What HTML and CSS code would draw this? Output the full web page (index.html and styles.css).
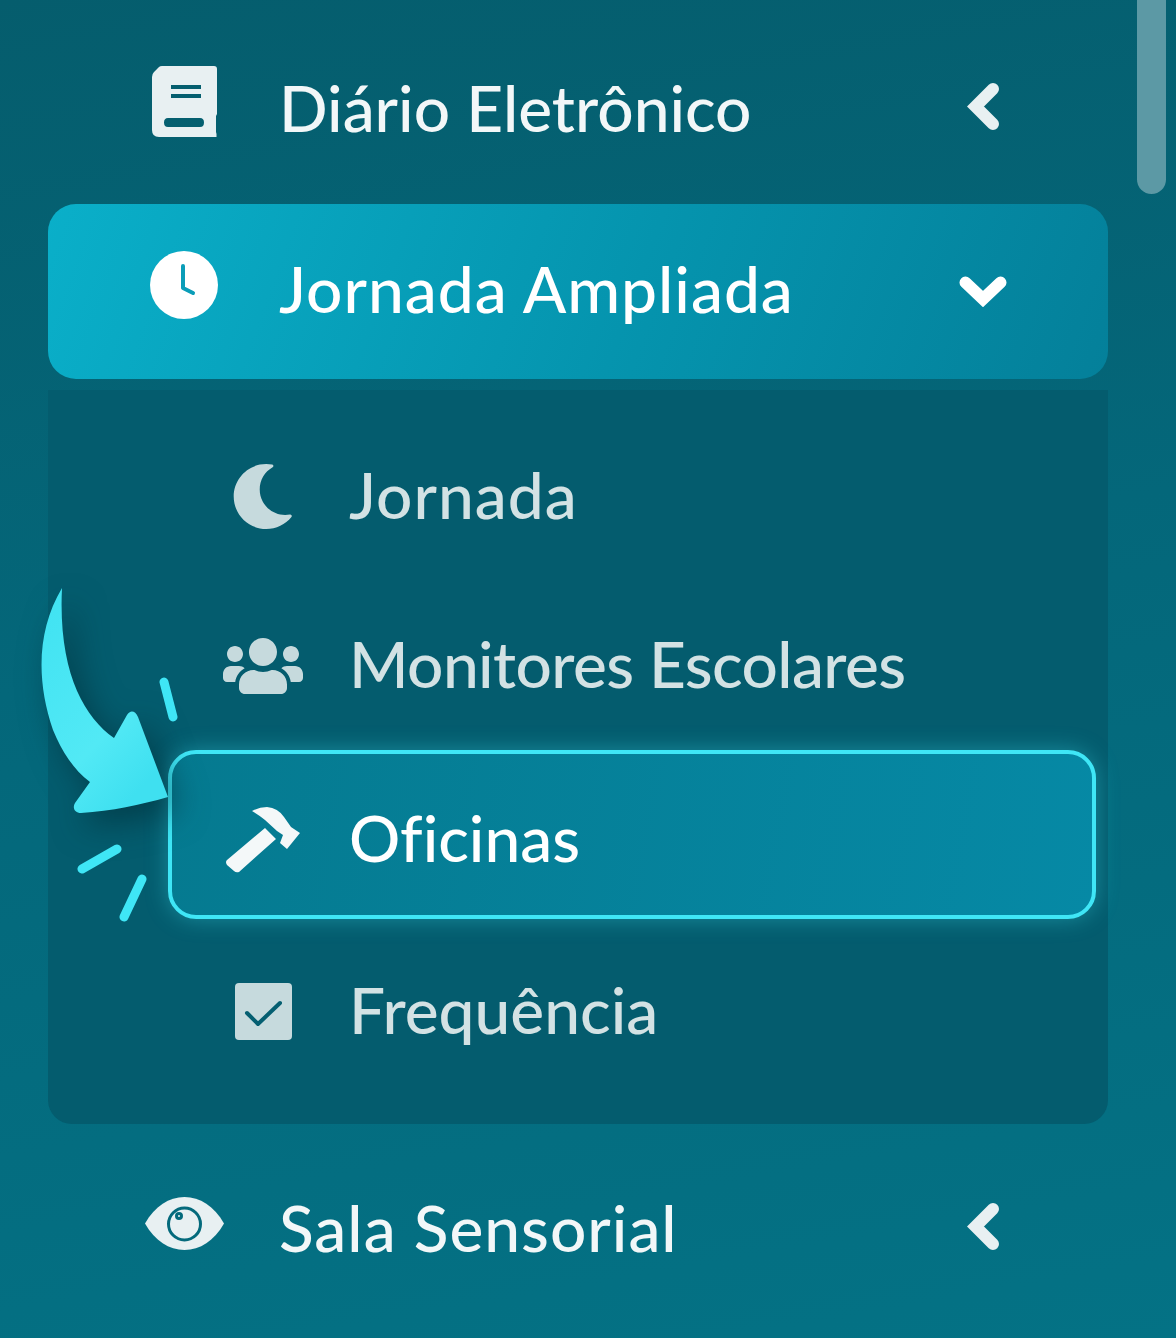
FILE: index.html
```html
<!DOCTYPE html>
<html lang="pt-BR">
<head>
    <meta charset="utf-8">
    <title>Menu</title>
    <link rel="stylesheet" href="styles.css">
</head>
<body>
<nav class="sidebar">
    <a class="item item-first">
        <span class="icon icon-up"><svg class="i-book" viewBox="0 0 65 71"><path fill-rule="evenodd" d="M10 0H62Q65 0 65 3V48L64 50V66L64.500 68V71H7Q0 71 0 64V11Q0 8 2 6L7 1Q8 0 10 0ZM19 19V23H49V19ZM19 28V32H49V28ZM16 52Q12 52 12 56.500Q12 61 16 61H48Q52 61 52 56.500Q52 52 48 52Z"/></svg></span>
        <span class="label">Diário Eletrônico</span>
        <svg class="chev chev-left" viewBox="0 0 33 47"><path d="M26 6L8.500 23.500L26 41"/></svg>
    </a>
    <a class="item item-open">
        <span class="icon icon-up"><svg class="i-clock" viewBox="0 0 68 68"><circle cx="34" cy="34" r="34"/><path class="hand" d="M33 15v22l10 5"/></svg></span>
        <span class="label label-wide">Jornada Ampliada</span>
        <svg class="chev chev-down" viewBox="0 0 48 31"><path d="M6.500 6.500L24 23L41.500 6.500"/></svg>
    </a>
    <div class="submenu">
        <a class="subitem">
            <span class="icon"><svg class="i-moon" viewBox="27 0 462 512"><path d="M283.211 512c78.962 0 151.079-35.925 198.857-94.792 7.068-8.708-.639-21.43-11.562-19.35-124.203 23.654-238.262-71.576-238.262-196.954 0-72.222 38.662-138.635 101.498-174.394 9.686-5.512 7.25-20.197-3.756-22.23A258.156 258.156 0 0 0 283.211 0c-141.309 0-256 114.511-256 256 0 141.309 114.511 256 256 256z"/></svg></span>
            <span class="label label-wide">Jornada</span>
        </a>
        <a class="subitem">
            <span class="icon"><svg class="i-users" viewBox="0 32 640 448"><path d="M96 224c35.300 0 64-28.700 64-64s-28.700-64-64-64-64 28.700-64 64 28.700 64 64 64zm448 0c35.300 0 64-28.700 64-64s-28.700-64-64-64-64 28.700-64 64 28.700 64 64 64zm32 32h-64c-17.600 0-33.500 7.100-45.100 18.600 40.300 22.100 68.900 62 75.100 109.400h66c17.700 0 32-14.300 32-32v-32c0-35.300-28.700-64-64-64zm-256 0c61.900 0 112-50.100 112-112S381.900 32 320 32 208 82.100 208 144s50.100 112 112 112zm76.800 32h-8.300c-20.800 10-43.900 16-68.500 16s-47.600-6-68.500-16h-8.300C179.600 288 128 339.600 128 403.200V432c0 26.500 21.500 48 48 48h288c26.500 0 48-21.500 48-48v-28.800c0-63.600-51.600-115.200-115.200-115.200zm-223.700-13.400C161.500 263.100 145.600 256 128 256H64c-35.300 0-64 28.700-64 64v32c0 17.700 14.300 32 32 32h65.900c6.300-47.400 34.900-87.300 75.200-109.400z"/></svg></span>
            <span class="label label-tight">Monitores Escolares</span>
        </a>
        <a class="subitem subitem-on">
            <span class="icon"><svg class="i-hammer" viewBox="0 0 74 66"><path d="M26 4Q33 0 41 0Q52 1 58 10L65 20L74 26L61 42L54 36L57 28L51 24L39 13Q33 8 26 4ZM39 21L50 32L13 65Q10 66 8 64L1 58Q-1 55 1 53Z"/></svg></span>
            <span class="label">Oficinas</span>
        </a>
        <a class="subitem subitem-last">
            <span class="icon"><svg class="i-check" viewBox="0 0 57 57"><rect width="57" height="57" rx="4"/><path class="tick" d="M12 30l11 11 22-21"/></svg></span>
            <span class="label">Frequência</span>
        </a>
    </div>
    <a class="item item-last">
        <span class="icon"><svg class="i-eye" viewBox="0 0 79 53"><path d="M0 26.500C10 9 24 0 39.500 0S69 9 79 26.500C69 44 55 53 39.500 53S10 44 0 26.500Z"/><circle class="ring" cx="39.500" cy="27" r="16"/><circle class="ring-dot" cx="34" cy="19" r="2.500"/></svg></span>
        <span class="label label-wide">Sala Sensorial</span>
        <svg class="chev chev-left" viewBox="0 0 33 47"><path d="M26 6L8.500 23.500L26 41"/></svg>
    </a>
</nav>
<div class="scroll-thumb"></div>
<svg class="pointer" viewBox="30 575 160 360">
    <defs>
        <linearGradient id="arrowfill" x1="0" y1="0" x2="0.6" y2="1">
            <stop offset="0" stop-color="#3fe2f2"/>
            <stop offset="0.7" stop-color="#52e9f5"/>
            <stop offset="1" stop-color="#3fe0f0"/>
        </linearGradient>
    </defs>
    <path class="arrow" d="M62 588C37 630 36 680 53 730C62 752 74 770 90 782L75 803C72 808 75 813 81 813C112 811 140 805 168 797L138 717C135 710 130 710 127 715L114 738C83 716 58 670 62 588Z"/>
    <path class="dash" d="M164 682L173 717M82 869L117 849M124 917L142 879"/>
</svg>
</body>
</html>
```

FILE: styles.css
```css
html {
    overflow: hidden;
}

body {
    margin: 0;
    width: 1176px;
    height: 1338px;
    overflow: hidden;
    position: relative;
    background: linear-gradient(170deg, #055d6d 0%, #04677a 45%, #047285 100%);
    font-family: "Lato", "Noto Sans", sans-serif;
}

.sidebar {
    width: 1060px;
    margin-left: 48px;
    padding-top: 23px;
    display: flex;
    flex-direction: column;
}

.icon {
    width: 80px;
    flex: none;
    display: flex;
    justify-content: center;
}

.icon-up {
    margin-bottom: 14px;
}

.icon svg {
    display: block;
}

.label {
    font-size: 64px;
    font-weight: 500;
    line-height: 70px;
    font-variant-ligatures: none;
    margin-top: -5px;
}

.label-wide {
    letter-spacing: 1px;
}

.label-tight {
    letter-spacing: -0.600px;
}

.item {
    height: 175px;
    display: flex;
    align-items: center;
    padding-left: 96px;
    color: #f2f7f8;
    fill: #e8f0f2;
}

.item .label {
    margin-left: 55px;
}

.item-first {
    margin-bottom: 6px;
}

.item-open {
    color: #fff;
    fill: #fff;
    border-radius: 28px;
    background: linear-gradient(110deg, #0aafc9 0%, #0594ae 55%, #04809a 100%);
}

.item-last {
    margin-top: 19px;
}

.item .chev {
    fill: none;
    stroke: #e8f0f2;
    stroke-width: 12;
    stroke-linecap: round;
}

.item-open .chev {
    stroke: #fff;
}

.chev-left {
    width: 33px;
    height: 47px;
    margin-left: auto;
    margin-right: 108px;
    margin-bottom: 8px;
}

.chev-down {
    width: 48px;
    height: 31px;
    margin-left: auto;
    margin-right: 101px;
}

.i-book {
    width: 65px;
    height: 71px;
    margin-bottom: 4px;
}

.i-clock {
    width: 68px;
    height: 68px;
}

.i-clock .hand {
    fill: none;
    stroke: #0a9db8;
    stroke-width: 4;
    stroke-linecap: round;
    stroke-linejoin: round;
}

.i-moon {
    width: 60px;
    height: 65px;
}

.i-users {
    width: 83px;
    height: 58px;
}

.i-hammer {
    width: 74px;
    height: 66px;
}

.i-check {
    width: 57px;
    height: 57px;
}

.i-check .tick {
    fill: none;
    stroke: #055f71;
    stroke-width: 4;
    stroke-linecap: round;
    stroke-linejoin: round;
}

.i-eye {
    width: 79px;
    height: 53px;
    margin-bottom: 14px;
}

.i-eye .ring,
.i-eye .ring-dot {
    fill: none;
    stroke: #046a7c;
    stroke-width: 3;
}

.submenu {
    margin-top: 11px;
    padding: 22px 12px 28px 120px;
    background: #045c6e;
    border-radius: 0 0 24px 24px;
    display: flex;
    flex-direction: column;
}

.subitem {
    height: 169px;
    box-sizing: border-box;
    display: flex;
    align-items: center;
    padding-left: 51px;
    border: 4px solid transparent;
    border-radius: 28px;
    color: #d3e2e4;
    fill: #c6dadd;
}

.subitem .label {
    margin-left: 46px;
    margin-top: -3px;
}

.subitem-on {
    padding-top: 10px;
    color: #fff;
    fill: #f4f8f9;
    border-color: #3fe6f6;
    background: linear-gradient(100deg, #057a90 0%, #0689a5 100%);
    box-shadow: 0 0 22px rgba(63, 230, 246, 0.35);
}

.subitem-last {
    margin-top: 8px;
}

.scroll-thumb {
    position: absolute;
    top: -20px;
    left: 1137px;
    width: 29px;
    height: 214px;
    border-radius: 15px;
    background: #5c99a5;
}

.pointer {
    position: absolute;
    left: 30px;
    top: 575px;
    width: 160px;
    height: 360px;
    overflow: visible;
}

.arrow {
    fill: url(#arrowfill);
    filter: drop-shadow(10px 12px 16px rgba(0, 40, 50, 0.55));
}

.dash {
    fill: none;
    stroke: #3fe6f6;
    stroke-width: 9;
    stroke-linecap: round;
}
```
